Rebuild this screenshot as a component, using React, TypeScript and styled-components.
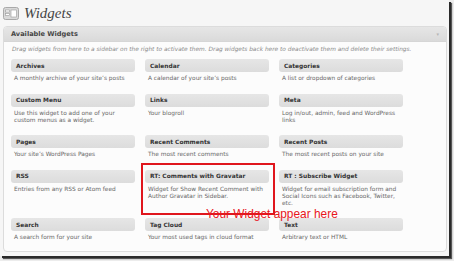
import React from "react";
import styled, { createGlobalStyle } from "styled-components";

const Global = createGlobalStyle`
  html, body { margin: 0; padding: 0; background: #ececec; }
  #root { width: 454px; height: 261px; overflow: hidden; }
`;

const Stage = styled.div`
  width: 454px;
  height: 261px;
  background: #ececec;
`;

const Frame = styled.div`
  position: relative;
  width: 449px;
  height: 256px;
  box-sizing: border-box;
  background: #f6f6f6;
  box-shadow: 2px 2px 0 0 #2a2a2a, 3px 3px 1px 0 #555;
  padding: 4px 0 0 3px;
  font-family: "DejaVu Sans", Verdana, sans-serif;
`;

const TitleRow = styled.div`
  display: flex;
  align-items: center;
  gap: 5px;
  height: 18px;
  margin-bottom: 4px;
`;

const PageTitle = styled.h2`
  margin: 0;
  font-family: "Liberation Serif", "DejaVu Serif", serif;
  font-style: italic;
  font-weight: normal;
  font-size: 15px;
  color: #464646;
  line-height: 18px;
`;

const Panel = styled.section`
  width: 444px;
  height: 226px;
  box-sizing: border-box;
  border: 1px solid #dcdcdc;
  border-radius: 4px;
  background: #fcfcfc;
  overflow: hidden;
`;

const PanelHeader = styled.div`
  display: flex;
  align-items: center;
  justify-content: space-between;
  height: 14px;
  padding: 0 7px 0 7px;
  background: linear-gradient(#e6e6e6, #dadada);
  border-bottom: 1px solid #d6d6d6;
`;

const HeaderTitle = styled.h3`
  margin: 0;
  font-size: 6.6px;
  font-weight: bold;
  color: #464646;
`;

const Toggle = styled.span`
  font-size: 5px;
  color: #b5b5b5;
`;

const Hint = styled.p`
  margin: 4px 0 0 8px;
  font-size: 5.85px;
  font-style: italic;
  color: #8a8a8a;
  line-height: 7px;
  white-space: nowrap;
`;

const Grid = styled.div`
  display: grid;
  grid-template-columns: repeat(3, 124px);
  column-gap: 10px;
  align-items: start;
  padding: 6px 0 0 7px;
`;

const Widget = styled.div`
  padding-bottom: 11.5px;
`;

const WidgetTop = styled.div`
  height: 13px;
  display: flex;
  align-items: center;
  padding-left: 5px;
  border-radius: 3px;
  background: linear-gradient(#e6e6e6, #dcdcdc);
  font-size: 5.9px;
  font-weight: bold;
  color: #333;
`;

const Desc = styled.div`
  margin-top: 3px;
  padding: 0 6px 0 3px;
  font-size: 5.85px;
  line-height: 7px;
  color: #666;
`;

const Highlight = styled.div`
  position: absolute;
  left: 141px;
  top: 163px;
  width: 134px;
  height: 52px;
  box-sizing: border-box;
  border: 2px solid #e0161d;
  pointer-events: none;
`;

const Note = styled.div`
  position: absolute;
  left: 206px;
  top: 207px;
  font-family: "Liberation Sans", Arial, sans-serif;
  font-size: 11.9px;
  line-height: 14px;
  color: #e8161d;
  white-space: nowrap;
`;

const WidgetsIcon = () => (
  <svg width="16" height="13" viewBox="0 0 16 13">
    <rect x="0.5" y="0.5" width="15" height="12" rx="2" fill="#d9d9d9" stroke="#a9a9a9" />
    <rect x="2.5" y="3" width="4" height="2" fill="#fff" stroke="#9a9a9a" strokeWidth="0.6" />
    <rect x="2.5" y="6.5" width="4" height="2" fill="#fff" stroke="#9a9a9a" strokeWidth="0.6" />
    <rect x="8" y="3" width="5.5" height="7" fill="#fff" stroke="#9a9a9a" strokeWidth="0.6" />
  </svg>
);

const widgets: [string, string][] = [
  ["Archives", "A monthly archive of your site\u2019s posts"],
  ["Calendar", "A calendar of your site\u2019s posts"],
  ["Categories", "A list or dropdown of categories"],
  ["Custom Menu", "Use this widget to add one of your custom menus as a widget."],
  ["Links", "Your blogroll"],
  ["Meta", "Log in/out, admin, feed and WordPress links"],
  ["Pages", "Your site\u2019s WordPress Pages"],
  ["Recent Comments", "The most recent comments"],
  ["Recent Posts", "The most recent posts on your site"],
  ["RSS", "Entries from any RSS or Atom feed"],
  ["RT: Comments with Gravatar", "Widget for Show Recent Comment with Author Gravatar in Sidebar."],
  ["RT : Subscribe Widget", "Widget for email subscription form and Social Icons such as Facebook, Twitter, etc."],
  ["Search", "A search form for your site"],
  ["Tag Cloud", "Your most used tags in cloud format"],
  ["Text", "Arbitrary text or HTML"],
];

export default function App() {
  return (
    <Stage>
      <Global />
      <Frame>
        <TitleRow>
          <WidgetsIcon />
          <PageTitle>Widgets</PageTitle>
        </TitleRow>
        <Panel>
          <PanelHeader>
            <HeaderTitle>Available Widgets</HeaderTitle>
            <Toggle>▾</Toggle>
          </PanelHeader>
          <Hint>
            Drag widgets from here to a sidebar on the right to activate them. Drag widgets back here to
            deactivate them and delete their settings.
          </Hint>
          <Grid>
            {widgets.map(([title, desc]) => (
              <Widget key={title}>
                <WidgetTop>{title}</WidgetTop>
                <Desc>{desc}</Desc>
              </Widget>
            ))}
          </Grid>
        </Panel>
        <Highlight />
        <Note>Your Widget appear here</Note>
      </Frame>
    </Stage>
  );
}
